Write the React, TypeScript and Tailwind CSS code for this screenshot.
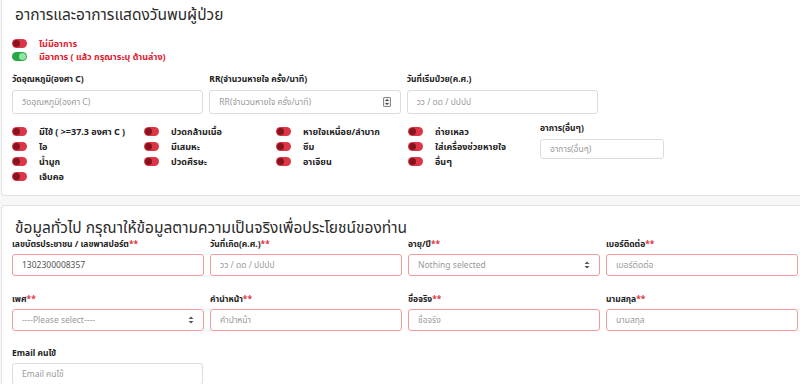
import { useState } from 'react'

const FONT = { fontFamily: '"Noto Sans", "Noto Sans Thai", "Loma", "Liberation Sans", sans-serif' }

const SYMPTOMS: string[][] = [
  ['มีไข้ ( >=37.3 องศา C )', 'ไอ', 'น้ำมูก', 'เจ็บคอ'],
  ['ปวดกล้ามเนื้อ', 'มีเสมหะ', 'ปวดศีรษะ'],
  ['หายใจเหนื่อย/ลำบาก', 'ซึม', 'อาเจียน'],
  ['ถ่ายเหลว', 'ใส่เครื่องช่วยหายใจ', 'อื่นๆ'],
]

function Toggle({ on }: { on: boolean }) {
  return (
    <span
      className={`relative inline-flex h-[9px] w-[15px] shrink-0 items-center rounded-full ${on ? 'bg-[#28a745]' : 'bg-[#dc3545]'}`}
    >
      <span
        className={`absolute top-[1px] h-[7px] w-[7px] rounded-full ${on ? 'right-[1px] bg-[#8fe3a3]' : 'left-[1px] bg-[#86141f]'}`}
      />
    </span>
  )
}

function Label({ text, req }: { text: string; req?: boolean }) {
  return (
    <div className="h-[12px] whitespace-nowrap text-[8.5px] font-bold leading-[12px] text-[#222]">
      {text}
      {req && <span className="text-[#e0303b]">**</span>}
    </div>
  )
}

function Field({ placeholder, value, req, h = 'h-[22px]', suffix }: { placeholder: string; value?: string; req?: boolean; h?: string; suffix?: React.ReactNode }) {
  return (
    <div
      className={`flex ${h} items-center justify-between rounded-[3px] border bg-white px-[9px] text-[8.5px] ${req ? 'border-[#f39a9a]' : 'border-[#dcdcdc]'}`}
    >
      <span className={value ? 'text-[#555]' : 'text-[#9a9a9a]'}>{value ?? placeholder}</span>
      {suffix}
    </div>
  )
}

const SelectArrow = (
  <svg width="6" height="8" viewBox="0 0 6 8" className="text-[#555]">
    <path d="M3 0.5 L5.5 3 H0.5 Z M3 7.5 L5.5 5 H0.5 Z" fill="currentColor" />
  </svg>
)

const Spinner = (
  <span className="flex h-[10px] w-[8px] flex-col items-center justify-center rounded-[1px] border border-[#888] bg-[#eee]">
    <svg width="6" height="8" viewBox="0 0 6 8">
      <path d="M3 1 L5 3 H1 Z M3 7 L5 5 H1 Z" fill="#444" />
    </svg>
  </span>
)

export default function App() {
  const [cough] = useState(false)

  return (
    <div className="h-[384px] w-[800px] overflow-hidden bg-[#f7f7f7]" style={FONT}>
      {/* อาการ */}
      <div className="ml-px mr-[-6px] h-[196px] rounded-b-[4px] border border-t-0 border-[#e2e2e2] bg-white px-[10px]">
        <div className="pl-[3px] pt-[4px] text-[15.5px] leading-[20px] text-[#2b2b2b]">อาการและอาการแสดงวันพบผู้ป่วย</div>

        <div className="mt-[15px] flex flex-col gap-[4px]">
          <div className="flex h-[9px] items-center gap-[12px]">
            <Toggle on={cough} />
            <span className="text-[9px] font-bold text-[#e0202e]">ไม่มีอาการ</span>
          </div>
          <div className="flex h-[9px] items-center gap-[12px]">
            <Toggle on />
            <span className="text-[9px] font-bold text-[#e0202e]">มีอาการ ( แล้ว กรุณาระบุ ด้านล่าง)</span>
          </div>
        </div>

        <div className="mt-[12px] grid w-[586px] grid-cols-3 gap-x-[6px]">
          <div>
            <Label text="วัดอุณหภูมิ(องศา C)" />
            <div className="mt-[5px]"><Field h="h-[24px]" placeholder="วัดอุณหภูมิ(องศา C)" /></div>
          </div>
          <div>
            <Label text="RR(จำนวนหายใจ ครั้ง/นาที)" />
            <div className="mt-[5px]"><Field h="h-[24px]" placeholder="RR(จำนวนหายใจ ครั้ง/นาที)" suffix={Spinner} /></div>
          </div>
          <div>
            <Label text="วันที่เริ่มป่วย(ค.ศ.)" />
            <div className="mt-[5px]"><Field h="h-[24px]" placeholder="วว / ดด / ปปปป" /></div>
          </div>
        </div>

        <div className="mt-[13px] flex">
          {SYMPTOMS.map((col, i) => (
            <div key={i} className="flex w-[132px] flex-col gap-[6px]">
              {col.map((s) => (
                <div key={s} className="flex h-[9px] items-center gap-[12px]">
                  <Toggle on={false} />
                  <span className="whitespace-nowrap text-[9px] font-bold text-[#222]">{s}</span>
                </div>
              ))}
            </div>
          ))}
          <div className="-mt-[5px] w-[124px]">
            <Label text="อาการ(อื่นๆ)" />
            <div className="mt-[5px]"><Field h="h-[20px]" placeholder="อาการ(อื่นๆ)" /></div>
          </div>
        </div>
      </div>

      {/* ข้อมูลทั่วไป */}
      <div className="ml-px mr-[-6px] mt-[9px] h-[200px] rounded-t-[4px] border border-b-0 border-[#e2e2e2] bg-white px-[10px]">
        <div className="pl-[3px] pt-[11px] text-[15.5px] leading-[20px] text-[#2b2b2b]">
          ข้อมูลทั่วไป กรุณาให้ข้อมูลตามความเป็นจริงเพื่อประโยชน์ของท่าน
        </div>
        <div className="mt-[1px] grid w-[786px] grid-cols-4 gap-x-[6px]">
          <div>
            <Label text="เลขบัตรประชาชน / เลขพาสปอร์ต" req />
            <div className="mt-[4px]"><Field req value="1302300008357" placeholder="" /></div>
          </div>
          <div>
            <Label text="วันที่เกิด(ค.ศ.)" req />
            <div className="mt-[4px]"><Field req placeholder="วว / ดด / ปปปป" /></div>
          </div>
          <div>
            <Label text="อายุ/ปี" req />
            <div className="mt-[4px]"><Field req placeholder="Nothing selected" suffix={SelectArrow} /></div>
          </div>
          <div>
            <Label text="เบอร์ติดต่อ" req />
            <div className="mt-[4px]"><Field req placeholder="เบอร์ติดต่อ" /></div>
          </div>
        </div>

        <div className="mt-[17px] grid w-[786px] grid-cols-4 gap-x-[6px]">
          <div>
            <Label text="เพศ" req />
            <div className="mt-[4px]"><Field req placeholder="----Please select----" suffix={SelectArrow} /></div>
          </div>
          <div>
            <Label text="คำนำหน้า" req />
            <div className="mt-[4px]"><Field req placeholder="คำนำหน้า" /></div>
          </div>
          <div>
            <Label text="ชื่อจริง" req />
            <div className="mt-[4px]"><Field req placeholder="ชื่อจริง" /></div>
          </div>
          <div>
            <Label text="นามสกุล" req />
            <div className="mt-[4px]"><Field req placeholder="นามสกุล" /></div>
          </div>
        </div>

        <div className="mt-[16px] w-[191px]">
          <Label text="Email คนไข้" />
          <div className="mt-[4px]"><Field placeholder="Email คนไข้" /></div>
        </div>
      </div>
    </div>
  )
}
